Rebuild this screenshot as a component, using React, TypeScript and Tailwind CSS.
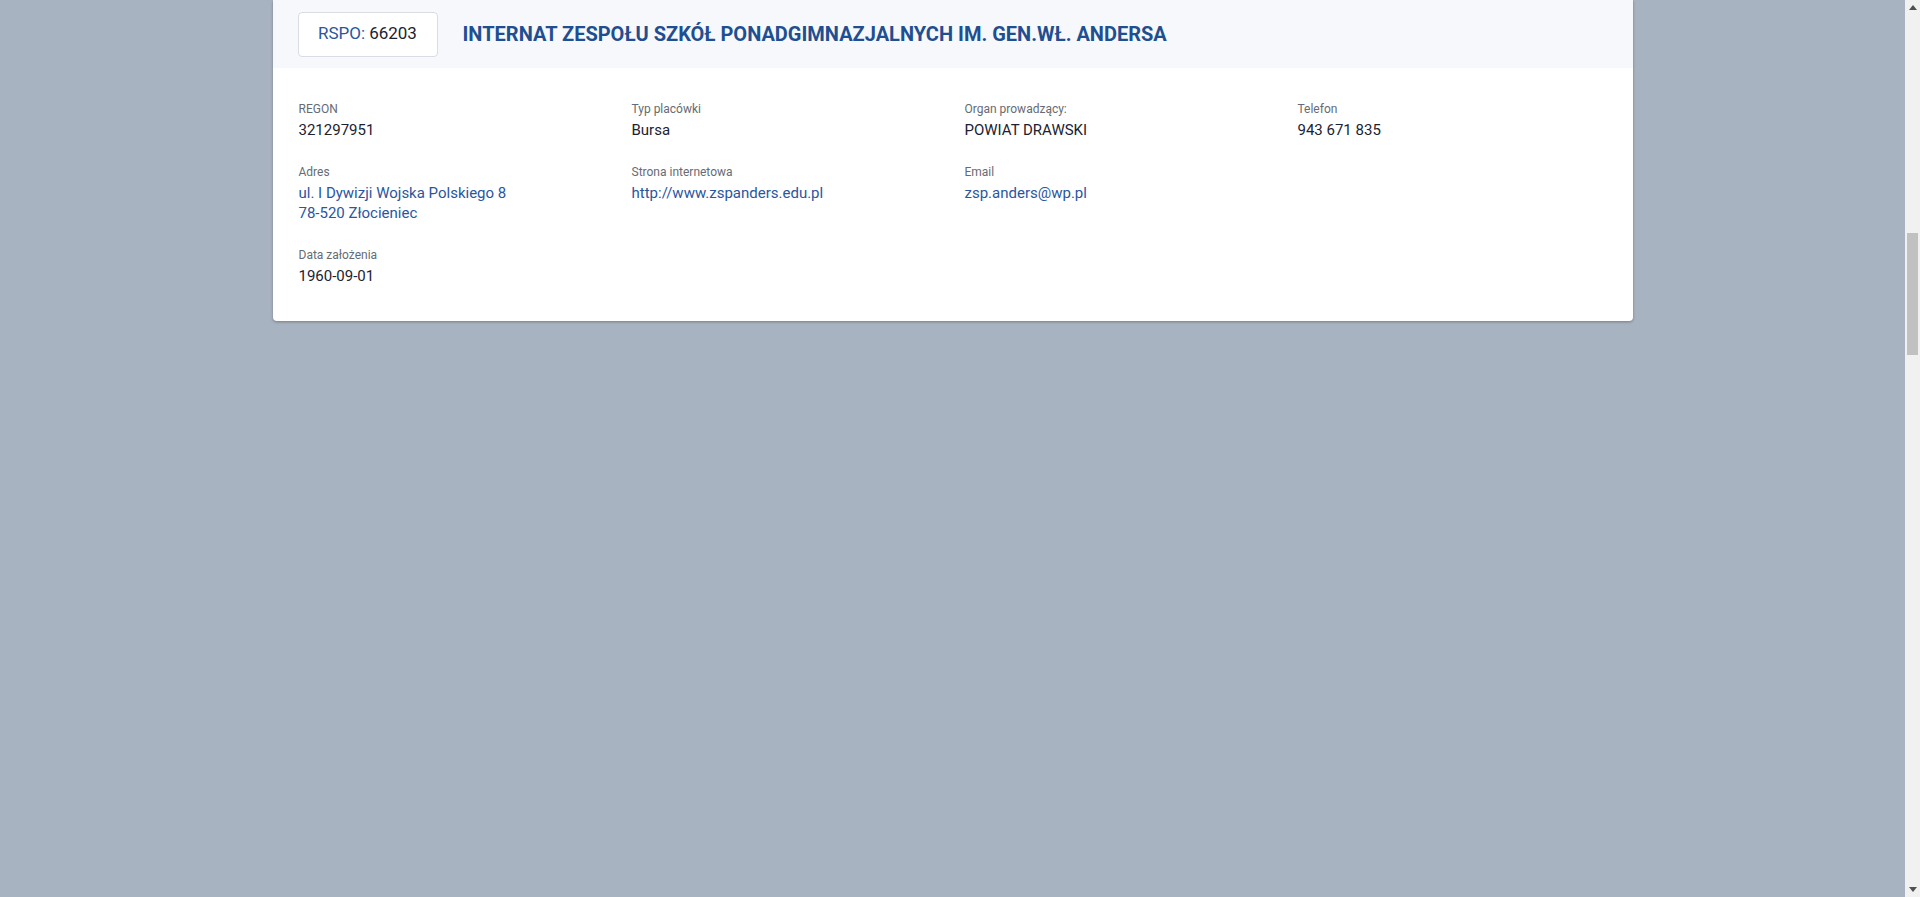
import React from "react";

const Field = ({ label, children, link }: { label: string; children: React.ReactNode; link?: boolean }) => (
  <div>
    <div className="text-[12px] leading-4 text-[#666b73]">{label}</div>
    <div className={`mt-[3px] text-[15px] leading-[20px] ${link ? "text-[#2a56a0]" : "text-[#1c2230]"}`}>{children}</div>
  </div>
);

const Scrollbar = () => (
  <div className="flex h-[897px] w-[15px] shrink-0 flex-col bg-[#f1f1f1]">
    <div className="flex h-[15px] items-center justify-center">
      <svg width="8" height="5" viewBox="0 0 8 5">
        <polygon points="0,5 8,5 4,0" fill="#505050" />
      </svg>
    </div>
    <div className="mx-auto mt-[218px] h-[122px] w-[11px] bg-[#c1c1c1]" />
    <div className="flex-1" />
    <div className="flex h-[15px] items-center justify-center">
      <svg width="8" height="5" viewBox="0 0 8 5">
        <polygon points="0,0 8,0 4,5" fill="#505050" />
      </svg>
    </div>
  </div>
);

export default function App() {
  return (
    <div
      className="flex h-[897px] overflow-hidden bg-[#a8b3c1]"
      style={{ fontFamily: "Roboto, 'Noto Sans', sans-serif" }}
    >
      <div className="flex-1">
        <div className="mx-auto w-[1360px] overflow-hidden rounded-b-[4px] bg-white shadow-[0_1px_3px_rgba(0,0,0,0.3)]">
          <div className="flex h-[68px] items-center gap-[25px] bg-[#f6f8fb] px-[25px]">
            <div className="flex h-[45px] w-[140px] items-center justify-center rounded-[4px] border border-[#d9dde3] bg-white text-[17px]">
              <span className="text-[#2a56a0]">RSPO:</span>
              <span className="ml-[4px] text-[#1c2230]">66203</span>
            </div>
            <div className="text-[20px] font-bold text-[#1f4e91]">
              INTERNAT ZESPOŁU SZKÓŁ PONADGIMNAZJALNYCH IM. GEN.WŁ. ANDERSA
            </div>
          </div>
          <div className="grid grid-cols-[333px_333px_333px_333px] gap-y-[24px] pl-[26px] pt-[33px] pb-[35px]">
            <Field label="REGON">321297951</Field>
            <Field label="Typ placówki">Bursa</Field>
            <Field label="Organ prowadzący:">POWIAT DRAWSKI</Field>
            <Field label="Telefon">943 671 835</Field>
            <Field label="Adres" link>
              ul. I Dywizji Wojska Polskiego 8
              <br />
              78-520 Złocieniec
            </Field>
            <Field label="Strona internetowa" link>http://www.zspanders.edu.pl</Field>
            <Field label="Email" link>zsp.anders@wp.pl</Field>
            <div />
            <Field label="Data założenia">1960-09-01</Field>
          </div>
        </div>
      </div>
      <Scrollbar />
    </div>
  );
}
